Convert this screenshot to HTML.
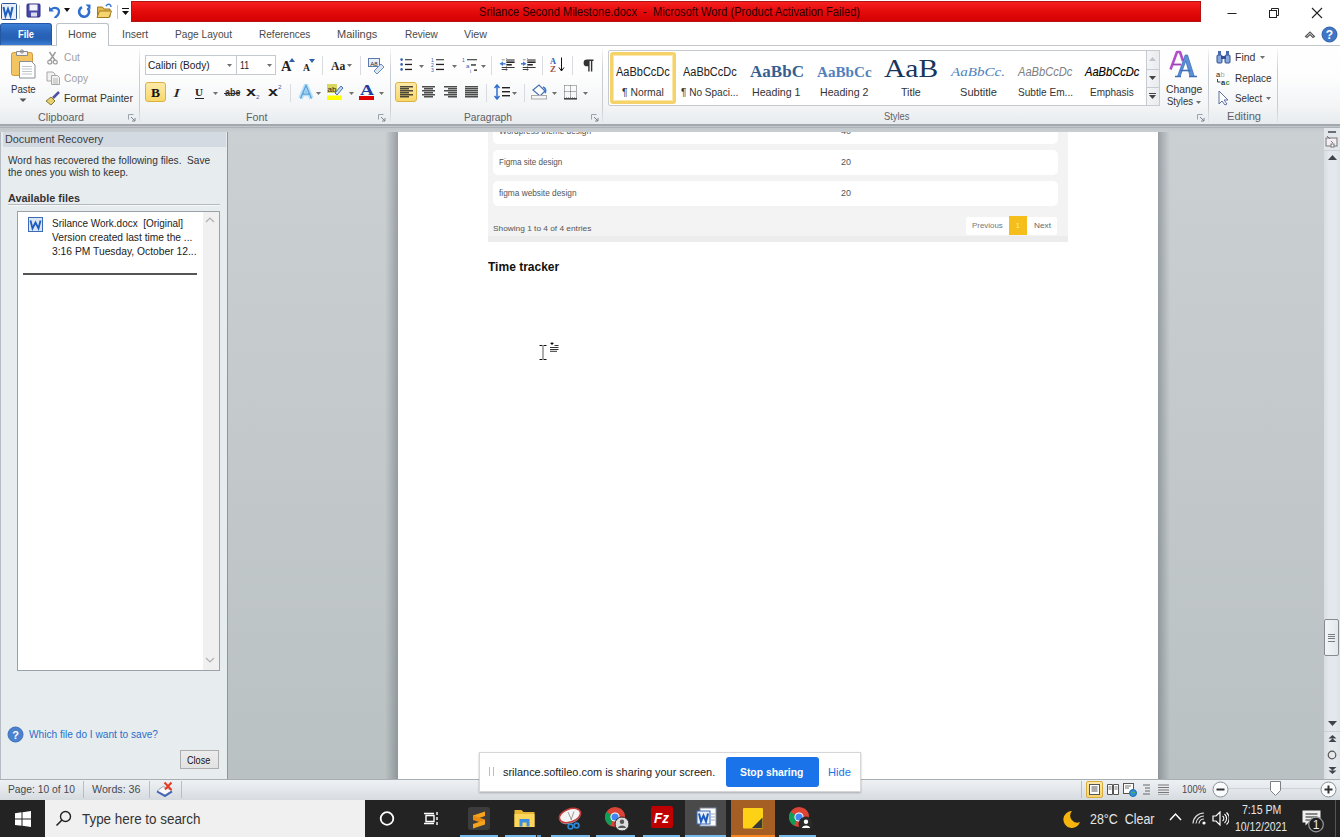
<!DOCTYPE html>
<html><head><meta charset="utf-8">
<style>
*{margin:0;padding:0;box-sizing:border-box}
html,body{width:1340px;height:837px;overflow:hidden;background:#fff;font-family:"Liberation Sans",sans-serif;font-size:12px;color:#333}
.a{position:absolute}
.t{position:absolute;white-space:pre;line-height:1;transform-origin:0 0}
</style></head><body>
<div class="a" style="left:0px;top:0px;width:1340px;height:45px;background:#fff"></div>
<div class="a" style="left:0px;top:125px;width:1340px;height:655px;background:linear-gradient(#cbd0d3,#c3c9cb 50%,#bac1c2)"></div>
<div class="a" style="left:385px;top:131px;width:13px;height:649px;background:linear-gradient(90deg,rgba(0,0,0,0),rgba(60,70,80,.35))"></div>
<div class="a" style="left:1158px;top:131px;width:12px;height:649px;background:linear-gradient(90deg,rgba(60,70,80,.35),rgba(0,0,0,0))"></div>
<div class="a" style="left:398px;top:131px;width:760px;height:649px;background:#fff"></div>
<div class="a" style="left:0px;top:45px;width:1340px;height:80px;background:linear-gradient(#fff,#fdfdfd 40%,#f3f5f7 75%,#e8ebee)"></div>
<div class="a" style="left:0px;top:45px;width:1340px;height:1px;background:#c3c7cb"></div>
<div class="a" style="left:0px;top:124px;width:1340px;height:2px;background:#aeb4bb"></div>
<div class="a" style="left:0px;top:126px;width:1340px;height:5px;background:linear-gradient(#b9bec4,#c9ced2)"></div>
<div class="a" style="left:131px;top:1px;width:1070px;height:21px;background:linear-gradient(#f5201f,#e50b0b 50%,#d40000);border:1px solid #b31414"></div>
<span class="t" style="left: 479px; font-size: 12px; color: rgb(42, 0, 0); font-family: &quot;Liberation Sans&quot;, sans-serif; top: 6px; transform: scaleX(0.9249);">Srilance Second Milestone.docx  -  Microsoft Word (Product Activation Failed)</span>
<svg class="a" style="left:1226px;top:8px;" width="12" height="12" viewBox="0 0 12 12"><path d="M1.5 5.5h9" stroke="#222" stroke-width="1"></path></svg>
<svg class="a" style="left:1268px;top:7px;" width="12" height="12" viewBox="0 0 12 12"><rect x="1.5" y="3.5" width="7" height="7" fill="none" stroke="#222"></rect><path d="M3.5 3.5v-2h7v7h-2" fill="none" stroke="#222"></path></svg>
<svg class="a" style="left:1311px;top:7px;" width="12" height="12" viewBox="0 0 12 12"><path d="M1 1l10 10M11 1L1 11" stroke="#222" stroke-width="1.1"></path></svg>
<svg class="a" style="left:0px;top:2px;" width="20" height="20" viewBox="0 0 20 20"><rect x="1.5" y="1.5" width="15" height="16" rx="1" fill="#e8eff8" stroke="#2b5797"></rect><path d="M3.5 5l2 9 2.5-7 2.5 7 2-9" fill="none" stroke="#1f5fbf" stroke-width="2"></path></svg>
<div class="a" style="left:19px;top:5px;width:1px;height:14px;background:#c7c7c7"></div>
<svg class="a" style="left:26px;top:3px;" width="16" height="17" viewBox="0 0 16 17"><rect x="1" y="1" width="13" height="13" rx="1" fill="#4848a8" stroke="#2c2c80"></rect><rect x="3.5" y="1.5" width="8" height="6" fill="#f4f4fb"></rect><rect x="5" y="9.5" width="6" height="4" fill="#dcdcf0"></rect></svg>
<svg class="a" style="left:46px;top:3px;" width="18" height="15" viewBox="0 0 18 15"><path d="M3 3.5v5h5z" fill="#2f6fd0"></path><path d="M5 6.5C8 4 13 4.5 13 8.5S10.5 13.5 8.5 15" fill="none" stroke="#2f6fd0" stroke-width="2.2"></path></svg>
<svg class="a" style="left:63px;top:7px;" width="8" height="6" viewBox="0 0 8 6"><path d="M1 1h6L4 5z" fill="#111"></path></svg>
<svg class="a" style="left:76px;top:3px;" width="16" height="15" viewBox="0 0 16 15"><path d="M6 4.2A5 5 0 1 0 11.5 5" fill="none" stroke="#2f6fd0" stroke-width="2.6"></path><path d="M9.5 1.5h5v5z" fill="#2f6fd0"></path></svg>
<svg class="a" style="left:96px;top:2px;" width="17" height="17" viewBox="0 0 17 17"><path d="M1.5 5h5l1.5 2h6v8h-12.5z" fill="#e6b84c" stroke="#a07a20"></path><path d="M3.5 9h12l-2.5 6.5h-12z" fill="#f6d56e" stroke="#a07a20"></path><path d="M10 4c2-3 5-2 5 1" fill="none" stroke="#3a7ad0" stroke-width="1.5"></path></svg>
<div class="a" style="left:117px;top:5px;width:1px;height:14px;background:#c7c7c7"></div>
<svg class="a" style="left:121px;top:7px;" width="9" height="10" viewBox="0 0 9 10"><path d="M1 1.5h7" stroke="#111"></path><path d="M1 4h7L4.5 8z" fill="#111"></path></svg>
<div class="a" style="left:0px;top:23px;width:52px;height:22px;background:linear-gradient(#3b7fd6,#2a64b9 45%,#2560b4 70%,#3a7cd4);border-radius:3px 3px 0 0;border:1px solid #2657a3;border-bottom:none"></div>
<span class="t" style="left: 18px; font-size: 11px; color: rgb(255, 255, 255); font-family: &quot;Liberation Sans&quot;, sans-serif; font-weight: 700; top: 29px; transform: scaleX(0.8442);">File</span>
<div class="a" style="left:56px;top:23px;width:53px;height:23px;background:#fff;border:1px solid #bcc1c7;border-bottom:none;border-radius:3px 3px 0 0"></div>
<span class="t" style="left: 68px; font-size: 10.5px; color: rgb(74, 74, 74); font-family: &quot;Liberation Sans&quot;, sans-serif; top: 29px; transform: scaleX(1.0173);">Home</span>
<span class="t" style="left: 122.4px; font-size: 10.5px; color: rgb(74, 74, 74); font-family: &quot;Liberation Sans&quot;, sans-serif; top: 29px; transform: scaleX(1.0013);">Insert</span>
<span class="t" style="left: 175.4px; font-size: 10.5px; color: rgb(74, 74, 74); font-family: &quot;Liberation Sans&quot;, sans-serif; top: 29px; transform: scaleX(0.9666);">Page Layout</span>
<span class="t" style="left: 259px; font-size: 10.5px; color: rgb(74, 74, 74); font-family: &quot;Liberation Sans&quot;, sans-serif; top: 29px; transform: scaleX(0.9571);">References</span>
<span class="t" style="left: 337.3px; font-size: 10.5px; color: rgb(74, 74, 74); font-family: &quot;Liberation Sans&quot;, sans-serif; top: 29px; transform: scaleX(1.0463);">Mailings</span>
<span class="t" style="left: 404.5px; font-size: 10.5px; color: rgb(74, 74, 74); font-family: &quot;Liberation Sans&quot;, sans-serif; top: 29px; transform: scaleX(0.9525);">Review</span>
<span class="t" style="left: 463.6px; font-size: 10.5px; color: rgb(74, 74, 74); font-family: &quot;Liberation Sans&quot;, sans-serif; top: 29px; transform: scaleX(1.0187);">View</span>
<svg class="a" style="left:1304px;top:29px;" width="12" height="10" viewBox="0 0 12 10"><path d="M1.5 7.5L6 3l4.5 4.5L9 8.5 6 5.5 3 8.5z" fill="none" stroke="#555" stroke-width="1.1"></path></svg>
<svg class="a" style="left:1321px;top:26px;" width="17" height="17" viewBox="0 0 17 17"><circle cx="8.5" cy="8.5" r="7.5" fill="#3f77c6" stroke="#2f5fa6"></circle><text x="8.5" y="13" text-anchor="middle" font-family="Liberation Sans" font-weight="700" font-size="12" fill="#fff">?</text></svg>
<svg class="a" style="left:10px;top:49px;" width="28" height="30" viewBox="0 0 28 30"><rect x="1.5" y="3.5" width="21" height="23" rx="2" fill="#f2c462" stroke="#d09a3e"></rect><path d="M6.5 2.5h11v4h-11z" fill="#f4f4f4" stroke="#8a8a8a"></path><circle cx="12" cy="2.5" r="1.6" fill="none" stroke="#8a8a8a"></circle><path d="M9.5 12.5h12l3.5 3.5v13h-15.5z" fill="#fff" stroke="#8a9099"></path><path d="M12 17.5h10M12 20h10M12 22.5h10M12 25h10" stroke="#c0c6cc"></path></svg>
<span class="t" style="left: 10.6px; font-size: 10.3px; color: rgb(51, 51, 51); font-family: &quot;Liberation Sans&quot;, sans-serif; top: 84.7px; transform: scaleX(0.9376);">Paste</span>
<svg class="a" style="left:19px;top:98px;" width="8" height="5" viewBox="0 0 8 5"><path d="M0.5 0.5h7L4 4z" fill="#555"></path></svg>
<svg class="a" style="left:47px;top:51px;" width="11" height="14" viewBox="0 0 11 14"><path d="M2.5 1l6 9M8.5 1l-6 9" stroke="#9a9a9a" stroke-width="1.4"></path><circle cx="2.8" cy="11" r="2" fill="none" stroke="#9a9a9a" stroke-width="1.2"></circle><circle cx="8.2" cy="11" r="2" fill="none" stroke="#9a9a9a" stroke-width="1.2"></circle></svg>
<span class="t" style="left: 63.8px; font-size: 10.3px; color: rgb(160, 160, 160); font-family: &quot;Liberation Sans&quot;, sans-serif; top: 53.4px; transform: scaleX(0.9918);">Cut</span>
<svg class="a" style="left:46px;top:71px;" width="15" height="14" viewBox="0 0 15 14"><path d="M1 1h6l2 2v7H1z" fill="#f2f2f2" stroke="#a8a8a8"></path><path d="M5.5 4.5h6l2 2v7h-8z" fill="#f2f2f2" stroke="#a8a8a8"></path><path d="M7 8h5M7 10h5M7 12h5" stroke="#b5b5b5"></path></svg>
<span class="t" style="left: 63.8px; font-size: 10.3px; color: rgb(160, 160, 160); font-family: &quot;Liberation Sans&quot;, sans-serif; top: 73.5px; transform: scaleX(1.0022);">Copy</span>
<svg class="a" style="left:45px;top:91px;" width="16" height="15" viewBox="0 0 16 15"><path d="M1 10l5-4 4 4-4 4z" fill="#e8d070" stroke="#8a7a30"></path><path d="M8 7l6-6" stroke="#5050a0" stroke-width="2.5"></path></svg>
<span class="t" style="left: 63.8px; font-size: 10.3px; color: rgb(51, 51, 51); font-family: &quot;Liberation Sans&quot;, sans-serif; top: 94.2px; transform: scaleX(1.0116);">Format Painter</span>
<span class="t" style="left: 38px; font-size: 10.3px; color: rgb(94, 97, 102); font-family: &quot;Liberation Sans&quot;, sans-serif; top: 112.7px; transform: scaleX(1.0436);">Clipboard</span>
<svg class="a" style="left:128px;top:114px;" width="8" height="8" viewBox="0 0 8 8"><path d="M0.5 0.5h5M0.5 0.5v5" stroke="#9aa3ad"></path><path d="M3 3l4 4M7 4v3H4" fill="none" stroke="#7a838d"></path></svg>
<div class="a" style="left:139px;top:49px;width:1px;height:73px;background:linear-gradient(rgba(200,205,210,.2),#c9ced4 30%,#c9ced4 80%,rgba(200,205,210,.3))"></div>
<div class="a" style="left:145px;top:55px;width:92px;height:20px;background:#fff;border:1px solid #c5cad0"></div>
<div class="a" style="left:236px;top:55px;width:40px;height:20px;background:#fff;border:1px solid #c5cad0"></div>
<span class="t" style="left: 148.4px; font-size: 10.3px; color: rgb(34, 34, 34); font-family: &quot;Liberation Sans&quot;, sans-serif; top: 60.6px; transform: scaleX(0.9876);">Calibri (Body)</span>
<span class="t" style="left: 240px; font-size: 10.3px; color: rgb(34, 34, 34); font-family: &quot;Liberation Sans&quot;, sans-serif; top: 60.6px; transform: scaleX(0.8409);">11</span>
<svg class="a" style="left:227px;top:63.5px;" width="5" height="3" viewBox="0 0 5 3"><path d="M0 0h5L2.5 3z" fill="#707070"></path></svg>
<svg class="a" style="left:267px;top:63.5px;" width="5" height="3" viewBox="0 0 5 3"><path d="M0 0h5L2.5 3z" fill="#707070"></path></svg>
<span class="t" style="left: 281px; font-size: 14px; color: rgb(34, 34, 34); font-family: &quot;Liberation Serif&quot;, serif; font-weight: 700; top: 59.7px; transform: scaleX(1.037);">A</span>
<svg class="a" style="left:289px;top:58px;" width="6" height="4" viewBox="0 0 6 4"><path d="M0 4L3 0l3 4z" fill="#2f5fb0"></path></svg>
<span class="t" style="left: 302.5px; font-size: 10px; color: rgb(34, 34, 34); font-family: &quot;Liberation Serif&quot;, serif; font-weight: 700; top: 62.7px; transform: scaleX(0.9676);">A</span>
<svg class="a" style="left:309px;top:59px;" width="6" height="4" viewBox="0 0 6 4"><path d="M0 0h6L3 4z" fill="#2f5fb0"></path></svg>
<div class="a" style="left:322px;top:56px;width:1px;height:19px;background:#d8dce0"></div>
<span class="t" style="left: 330.6px; font-size: 13px; color: rgb(34, 34, 34); font-family: &quot;Liberation Serif&quot;, serif; font-weight: 700; top: 59.3px; transform: scaleX(0.8936);">Aa</span>
<svg class="a" style="left:347px;top:63.5px;" width="5" height="3" viewBox="0 0 5 3"><path d="M0 0h5L2.5 3z" fill="#707070"></path></svg>
<div class="a" style="left:360px;top:56px;width:1px;height:19px;background:#d8dce0"></div>
<svg class="a" style="left:367px;top:57px;" width="18" height="17" viewBox="0 0 18 17"><rect x="1.5" y="1.5" width="11" height="8" fill="#e8eef8" stroke="#5a7ab0"></rect><text x="7" y="8.5" text-anchor="middle" font-size="6" font-family="Liberation Sans" fill="#223">A8</text><path d="M7 14l7-7 3 3-7 7z" fill="#dde6f4" stroke="#6a8ac0"></path></svg>
<div class="a" style="left:145px;top:82px;width:21px;height:20px;background:linear-gradient(#fdeaa8,#f9d86a);border:1px solid #dcb042;border-radius:3px"></div>
<span class="t" style="left: 151px; font-size: 12px; color: rgb(17, 17, 17); font-family: &quot;Liberation Serif&quot;, serif; font-weight: 700; top: 86.5px; transform: scaleX(1.1228);">B</span>
<span class="t" style="left: 173px; font-size: 12px; color: rgb(34, 34, 34); font-family: &quot;Liberation Serif&quot;, serif; font-style: italic; top: 86.5px; transform: scaleX(1.75);">I</span>
<span class="t" style="left: 195px; font-size: 10.3px; color: rgb(34, 34, 34); font-family: &quot;Liberation Serif&quot;, serif; font-weight: 700; top: 88px; transform: scaleX(1.0756);">U</span>
<div class="a" style="left:194.5px;top:98px;width:9px;height:1px;background:#222"></div>
<svg class="a" style="left:213px;top:91.5px;" width="5" height="3" viewBox="0 0 5 3"><path d="M0 0h5L2.5 3z" fill="#707070"></path></svg>
<span class="t" style="left: 224.5px; font-size: 10px; color: rgb(51, 51, 51); font-family: &quot;Liberation Sans&quot;, sans-serif; font-weight: 700; top: 88px; transform: scaleX(0.8994);">abe</span>
<div class="a" style="left:224px;top:92.5px;width:16px;height:1px;background:#333"></div>
<span class="t" style="left: 246px; font-size: 12px; color: rgb(34, 34, 34); font-family: &quot;Liberation Sans&quot;, sans-serif; font-weight: 700; top: 86px; transform: scaleX(1.4953);">x</span>
<span class="t" style="left: 256px; font-size: 6px; color: rgb(47, 95, 176); font-family: &quot;Liberation Sans&quot;, sans-serif; top: 94px; transform: scaleX(1.0467);">2</span>
<span class="t" style="left: 268px; font-size: 12px; color: rgb(34, 34, 34); font-family: &quot;Liberation Sans&quot;, sans-serif; font-weight: 700; top: 86px; transform: scaleX(1.4953);">x</span>
<span class="t" style="left: 278px; font-size: 6px; color: rgb(47, 95, 176); font-family: &quot;Liberation Sans&quot;, sans-serif; top: 84px; transform: scaleX(1.0467);">2</span>
<div class="a" style="left:290px;top:84px;width:1px;height:18px;background:#d8dce0"></div>
<svg class="a" style="left:298px;top:84px;" width="16" height="16" viewBox="0 0 16 16"><path d="M2.5 14.5L8 1.5l5.5 13M5 10h6" fill="none" stroke="#b5e0f8" stroke-width="4.5" stroke-linejoin="round"></path><path d="M2.5 14.5L8 1.5l5.5 13M5 10h6" fill="none" stroke="#5aa0dc" stroke-width="1.3"></path><path d="M8 5l2 5H6z" fill="#8ec6ec"></path></svg>
<svg class="a" style="left:316px;top:91.5px;" width="5" height="3" viewBox="0 0 5 3"><path d="M0 0h5L2.5 3z" fill="#707070"></path></svg>
<svg class="a" style="left:326px;top:83px;" width="18" height="18" viewBox="0 0 18 18"><rect x="1" y="1" width="10" height="9" fill="#d8d860"></rect><text x="1.5" y="8.5" font-size="8" font-family="Liberation Sans" fill="#222">ab</text><path d="M9 10l6-7 2 2-6 7z" fill="#c8daf0" stroke="#4a70b0"></path><rect x="1" y="12.5" width="15" height="4.5" fill="#ffff00"></rect></svg>
<svg class="a" style="left:349px;top:91.5px;" width="5" height="3" viewBox="0 0 5 3"><path d="M0 0h5L2.5 3z" fill="#707070"></path></svg>
<span class="t" style="left: 360px; font-size: 14px; color: rgb(31, 63, 159); font-family: &quot;Liberation Serif&quot;, serif; font-weight: 700; top: 84px; transform: scaleX(1.3827);">A</span>
<div class="a" style="left:359px;top:96px;width:15px;height:4px;background:#e00000"></div>
<svg class="a" style="left:379px;top:91.5px;" width="5" height="3" viewBox="0 0 5 3"><path d="M0 0h5L2.5 3z" fill="#707070"></path></svg>
<svg class="a" style="left:378px;top:114px;" width="8" height="8" viewBox="0 0 8 8"><path d="M0.5 0.5h5M0.5 0.5v5" stroke="#9aa3ad"></path><path d="M3 3l4 4M7 4v3H4" fill="none" stroke="#7a838d"></path></svg>
<span class="t" style="left: 246.3px; font-size: 10.3px; color: rgb(94, 97, 102); font-family: &quot;Liberation Sans&quot;, sans-serif; top: 112.7px; transform: scaleX(1.0432);">Font</span>
<div class="a" style="left:390px;top:49px;width:1px;height:73px;background:linear-gradient(rgba(200,205,210,.2),#c9ced4 30%,#c9ced4 80%,rgba(200,205,210,.3))"></div>
<svg class="a" style="left:400px;top:58px;" width="14" height="13" viewBox="0 0 14 13"><circle cx="1.6" cy="1.6" r="1.3" fill="#2f5fb0"></circle><circle cx="1.6" cy="6.4" r="1.3" fill="#2f5fb0"></circle><circle cx="1.6" cy="11.4" r="1.3" fill="#2f5fb0"></circle><rect x="5" y="1" width="7" height="1.3" fill="#555"></rect><rect x="5" y="5.8" width="7" height="1.3" fill="#222"></rect><rect x="5" y="10.8" width="7" height="1.3" fill="#222"></rect></svg>
<svg class="a" style="left:419px;top:64.5px;" width="5" height="3" viewBox="0 0 5 3"><path d="M0 0h5L2.5 3z" fill="#707070"></path></svg>
<svg class="a" style="left:431px;top:57px;" width="16" height="15" viewBox="0 0 16 15"><text x="0" y="5" font-size="5" font-family="Liberation Sans" fill="#2f5fb0">1</text><text x="0" y="10" font-size="5" font-family="Liberation Sans" fill="#2f5fb0">2</text><text x="0" y="15" font-size="5" font-family="Liberation Sans" fill="#2f5fb0">3</text><rect x="5" y="2" width="8" height="1.3" fill="#555"></rect><rect x="5" y="6.8" width="8" height="1.3" fill="#222"></rect><rect x="5" y="11.8" width="8" height="1.3" fill="#222"></rect></svg>
<svg class="a" style="left:452px;top:64.5px;" width="5" height="3" viewBox="0 0 5 3"><path d="M0 0h5L2.5 3z" fill="#707070"></path></svg>
<svg class="a" style="left:462px;top:57px;" width="18" height="16" viewBox="0 0 18 16"><text x="0" y="5" font-size="5" font-family="Liberation Sans" fill="#2f5fb0">1</text><text x="4" y="10.5" font-size="6" font-family="Liberation Sans" fill="#2f5fb0">a</text><text x="8" y="16" font-size="5" font-family="Liberation Sans" fill="#2f5fb0">i</text><rect x="5" y="2" width="10" height="1.3" fill="#555"></rect><rect x="9" y="7.3" width="5" height="1.3" fill="#222"></rect><rect x="12" y="12.5" width="3" height="1.3" fill="#222"></rect></svg>
<svg class="a" style="left:481px;top:64.5px;" width="5" height="3" viewBox="0 0 5 3"><path d="M0 0h5L2.5 3z" fill="#707070"></path></svg>
<div class="a" style="left:491px;top:56px;width:1px;height:19px;background:#d8dce0"></div>
<svg class="a" style="left:499px;top:57px;" width="17" height="16" viewBox="0 0 17 16"><rect x="2.7" y="2.3" width="3" height="1" fill="#999"></rect><rect x="7.4" y="2" width="8.2" height="2.2" fill="#8a8a8a"></rect><rect x="7.4" y="4.5" width="8.2" height="1.4" fill="#111"></rect><rect x="7.4" y="7.1" width="5.4" height="1.4" fill="#111"></rect><rect x="2.7" y="10" width="12.9" height="0.9" fill="#222"></rect><rect x="2.7" y="12" width="5.8" height="0.9" fill="#333"></rect><path d="M7.4 1v13" stroke="#555" stroke-width="0.6" stroke-dasharray="1 1"></path><path d="M0.5 6.8L4 4.5v4.6z" fill="#3a78d0"></path><path d="M3 6.8h3.5" stroke="#3a78d0" stroke-width="1.4"></path></svg>
<svg class="a" style="left:519.5px;top:57px;" width="17" height="16" viewBox="0 0 17 16"><rect x="2.7" y="2.3" width="3" height="1" fill="#999"></rect><rect x="7.4" y="2" width="8.2" height="2.2" fill="#8a8a8a"></rect><rect x="7.4" y="4.5" width="8.2" height="1.4" fill="#111"></rect><rect x="7.4" y="7.1" width="5.4" height="1.4" fill="#111"></rect><rect x="2.7" y="10" width="12.9" height="0.9" fill="#222"></rect><rect x="2.7" y="12" width="5.8" height="0.9" fill="#333"></rect><path d="M7.4 1v13" stroke="#555" stroke-width="0.6" stroke-dasharray="1 1"></path><path d="M6.5 6.8L3 4.5v4.6z" fill="#3a78d0"></path><path d="M1 6.8h4" stroke="#3a78d0" stroke-width="1.4"></path></svg>
<div class="a" style="left:542px;top:56px;width:1px;height:19px;background:#d8dce0"></div>
<span class="t" style="left: 550.2px; font-size: 8.5px; color: rgb(47, 95, 176); font-family: &quot;Liberation Serif&quot;, serif; font-weight: 700; top: 56.8px; transform: scaleX(0.9771);">A</span>
<span class="t" style="left: 550.2px; font-size: 8.5px; color: rgb(160, 80, 74); font-family: &quot;Liberation Serif&quot;, serif; font-weight: 700; top: 64.6px; transform: scaleX(1.0579);">Z</span>
<svg class="a" style="left:558px;top:57px;" width="8" height="15" viewBox="0 0 8 15"><path d="M3.5 0.5v13" stroke="#111" stroke-width="1"></path><path d="M1 10.5l2.5 3.5 2.5-3.5" fill="none" stroke="#111" stroke-width="1"></path></svg>
<div class="a" style="left:572px;top:56px;width:1px;height:19px;background:#d8dce0"></div>
<svg class="a" style="left:583px;top:58.5px;" width="11" height="13" viewBox="0 0 11 13"><path d="M4 0.5h6.5v1.6H9.3V12.5H7.9V2.1H6.6V12.5H5.2V7.3H4A3.4 3.4 0 0 1 4 0.5z" fill="#333"></path></svg>
<div class="a" style="left:395px;top:82px;width:22px;height:20px;background:linear-gradient(#fdeaa8,#f9d86a);border:1px solid #dcb042;border-radius:3px"></div>
<svg class="a" style="left:400px;top:86px;" width="13" height="13" viewBox="0 0 13 13"><rect x="0" y="0.2" width="13" height="1.2" fill="#222"></rect><rect x="0" y="2.2" width="9" height="1.2" fill="#222"></rect><rect x="0" y="4.2" width="13" height="1.2" fill="#222"></rect><rect x="0" y="6.2" width="9" height="1.2" fill="#222"></rect><rect x="0" y="8.2" width="13" height="1.2" fill="#222"></rect><rect x="0" y="10.2" width="9" height="1.2" fill="#222"></rect></svg>
<svg class="a" style="left:421.5px;top:86px;" width="13" height="13" viewBox="0 0 13 13"><rect x="0.0" y="0.2" width="13" height="1.2" fill="#222"></rect><rect x="2.0" y="2.2" width="9" height="1.2" fill="#222"></rect><rect x="0.0" y="4.2" width="13" height="1.2" fill="#222"></rect><rect x="2.0" y="6.2" width="9" height="1.2" fill="#222"></rect><rect x="0.0" y="8.2" width="13" height="1.2" fill="#222"></rect><rect x="2.0" y="10.2" width="9" height="1.2" fill="#222"></rect></svg>
<svg class="a" style="left:444px;top:86px;" width="13" height="13" viewBox="0 0 13 13"><rect x="0" y="0.2" width="13" height="1.2" fill="#222"></rect><rect x="4" y="2.2" width="9" height="1.2" fill="#222"></rect><rect x="0" y="4.2" width="13" height="1.2" fill="#222"></rect><rect x="4" y="6.2" width="9" height="1.2" fill="#222"></rect><rect x="0" y="8.2" width="13" height="1.2" fill="#222"></rect><rect x="4" y="10.2" width="9" height="1.2" fill="#222"></rect></svg>
<svg class="a" style="left:465px;top:86px;" width="13" height="13" viewBox="0 0 13 13"><rect x="0" y="0.2" width="13" height="1.2" fill="#222"></rect><rect x="0" y="2.2" width="13" height="1.2" fill="#222"></rect><rect x="0" y="4.2" width="13" height="1.2" fill="#222"></rect><rect x="0" y="6.2" width="13" height="1.2" fill="#222"></rect><rect x="0" y="8.2" width="13" height="1.2" fill="#222"></rect><rect x="0" y="10.2" width="13" height="1.2" fill="#222"></rect></svg>
<div class="a" style="left:486px;top:84px;width:1px;height:18px;background:#d8dce0"></div>
<svg class="a" style="left:494px;top:84px;" width="18" height="16" viewBox="0 0 18 16"><path d="M3 1v14M0.5 4L3 1l2.5 3M0.5 12L3 15l2.5-3" fill="none" stroke="#2f6fd0" stroke-width="1.5"></path><rect x="8" y="3" width="8" height="1.4" fill="#222"></rect><rect x="8" y="7" width="8" height="1.4" fill="#222"></rect><rect x="8" y="11" width="8" height="1.4" fill="#222"></rect></svg>
<svg class="a" style="left:512px;top:91.5px;" width="5" height="3" viewBox="0 0 5 3"><path d="M0 0h5L2.5 3z" fill="#707070"></path></svg>
<div class="a" style="left:524px;top:84px;width:1px;height:18px;background:#d8dce0"></div>
<svg class="a" style="left:531px;top:83px;" width="17" height="17" viewBox="0 0 17 17"><path d="M2 7l6-5 6 6-5 5z" fill="#fff" stroke="#4a6fb0" stroke-width="1.2"></path><path d="M12 4c3 1 3 4 2 6" fill="none" stroke="#3a7ad0" stroke-width="1.8"></path><rect x="0.5" y="12.5" width="15" height="3.5" fill="#f6f6f6" stroke="#aaa"></rect></svg>
<svg class="a" style="left:552px;top:91.5px;" width="5" height="3" viewBox="0 0 5 3"><path d="M0 0h5L2.5 3z" fill="#707070"></path></svg>
<svg class="a" style="left:564px;top:85px;" width="13" height="15" viewBox="0 0 13 15"><path d="M0.5 0.5h12v12.5h-12zM6.5 0.5v12.5M0.5 6.5h12" fill="none" stroke="#555" stroke-width="0.9" stroke-dasharray="1 1"></path><rect x="0" y="13" width="13" height="1.6" fill="#444"></rect></svg>
<svg class="a" style="left:583px;top:91.5px;" width="5" height="3" viewBox="0 0 5 3"><path d="M0 0h5L2.5 3z" fill="#707070"></path></svg>
<svg class="a" style="left:591px;top:114px;" width="8" height="8" viewBox="0 0 8 8"><path d="M0.5 0.5h5M0.5 0.5v5" stroke="#9aa3ad"></path><path d="M3 3l4 4M7 4v3H4" fill="none" stroke="#7a838d"></path></svg>
<span class="t" style="left: 464px; font-size: 10.3px; color: rgb(94, 97, 102); font-family: &quot;Liberation Sans&quot;, sans-serif; top: 112.7px; transform: scaleX(0.9981);">Paragraph</span>
<div class="a" style="left:602px;top:49px;width:1px;height:73px;background:linear-gradient(rgba(200,205,210,.2),#c9ced4 30%,#c9ced4 80%,rgba(200,205,210,.3))"></div>
<div class="a" style="left:608px;top:50px;width:552px;height:56px;background:#fff;border:1px solid #c6cbd1;border-radius:2px"></div>
<div class="a" style="left:1146px;top:50px;width:14px;height:56px;background:linear-gradient(90deg,#f3f5f7,#e9ecef);border:1px solid #c6cbd1"></div>
<div class="a" style="left:1146px;top:69px;width:14px;height:1px;background:#c6cbd1"></div>
<div class="a" style="left:1146px;top:87px;width:14px;height:1px;background:#c6cbd1"></div>
<svg class="a" style="left:1149px;top:57px;" width="7" height="4" viewBox="0 0 7 4"><path d="M0 4L3.5 0 7 4z" fill="#c0c4c8"></path></svg>
<svg class="a" style="left:1149px;top:76px;" width="7" height="4" viewBox="0 0 7 4"><path d="M0 0h7L3.5 4z" fill="#444"></path></svg>
<svg class="a" style="left:1149px;top:93px;" width="7" height="6" viewBox="0 0 7 6"><rect x="0" y="0" width="7" height="1" fill="#444"></rect><path d="M0 2h7L3.5 6z" fill="#444"></path></svg>
<div class="a" style="left:610px;top:52px;width:66px;height:52px;background:#fff;border:3px solid #f5d36a;border-radius:3px;box-shadow:inset 0 0 0 1px #fbe8a8"></div>
<span class="t" style="left: 616px; font-size: 12px; color: rgb(34, 34, 34); font-family: &quot;Liberation Sans&quot;, sans-serif; top: 65.6px; transform: scaleX(0.9167);">AaBbCcDc</span>
<span class="t" style="left: 621.5px; font-size: 10.3px; color: rgb(51, 51, 51); font-family: &quot;Liberation Sans&quot;, sans-serif; top: 87.6px; transform: scaleX(1.0053);">¶ Normal</span>
<span class="t" style="left: 683px; font-size: 12px; color: rgb(34, 34, 34); font-family: &quot;Liberation Sans&quot;, sans-serif; top: 65.6px; transform: scaleX(0.915);">AaBbCcDc</span>
<span class="t" style="left: 681.2px; font-size: 10.3px; color: rgb(51, 51, 51); font-family: &quot;Liberation Sans&quot;, sans-serif; top: 87.6px; transform: scaleX(0.9751);">¶ No Spaci...</span>
<span class="t" style="left: 750px; font-size: 16.5px; color: rgb(54, 95, 145); font-family: &quot;Liberation Serif&quot;, serif; font-weight: 700; top: 63.8px; transform: scaleX(1.0332);">AaBbC</span>
<span class="t" style="left: 752.3px; font-size: 10.3px; color: rgb(51, 51, 51); font-family: &quot;Liberation Sans&quot;, sans-serif; top: 87.6px; transform: scaleX(1.0329);">Heading 1</span>
<span class="t" style="left: 816.8px; font-size: 14px; color: rgb(79, 129, 189); font-family: &quot;Liberation Serif&quot;, serif; font-weight: 700; top: 65.8px; transform: scaleX(1.0799);">AaBbCc</span>
<span class="t" style="left: 819.6px; font-size: 10.3px; color: rgb(51, 51, 51); font-family: &quot;Liberation Sans&quot;, sans-serif; top: 87.6px; transform: scaleX(1.0308);">Heading 2</span>
<span class="t" style="left: 883.7px; font-size: 26px; color: rgb(23, 54, 93); font-family: &quot;Liberation Serif&quot;, serif; top: 55.8px; transform: scaleX(1.1369);">AaB</span>
<span class="t" style="left: 900.9px; font-size: 10.3px; color: rgb(51, 51, 51); font-family: &quot;Liberation Sans&quot;, sans-serif; top: 87.6px; transform: scaleX(1.0326);">Title</span>
<span class="t" style="left: 951px; font-size: 13px; color: rgb(79, 129, 189); font-family: &quot;Liberation Serif&quot;, serif; font-style: italic; top: 64.6px; transform: scaleX(1.1572);">AaBbCc.</span>
<span class="t" style="left: 959.5px; font-size: 10.3px; color: rgb(51, 51, 51); font-family: &quot;Liberation Sans&quot;, sans-serif; top: 88px; transform: scaleX(1.0739);">Subtitle</span>
<span class="t" style="left: 1017.6px; font-size: 12px; color: rgb(128, 128, 128); font-family: &quot;Liberation Sans&quot;, sans-serif; font-style: italic; top: 65.6px; transform: scaleX(0.9269);">AaBbCcDc</span>
<span class="t" style="left: 1017.6px; font-size: 10.3px; color: rgb(51, 51, 51); font-family: &quot;Liberation Sans&quot;, sans-serif; top: 88px; transform: scaleX(0.9805);">Subtle Em...</span>
<span class="t" style="left: 1084.7px; font-size: 12px; color: rgb(0, 0, 0); font-family: &quot;Liberation Sans&quot;, sans-serif; font-style: italic; -webkit-text-stroke: 0.15px rgb(0, 0, 0); top: 65.6px; transform: scaleX(0.9252);">AaBbCcDc</span>
<span class="t" style="left: 1090px; font-size: 10.3px; color: rgb(51, 51, 51); font-family: &quot;Liberation Sans&quot;, sans-serif; top: 88px; transform: scaleX(0.9686);">Emphasis</span>
<span class="t" style="left: 883.7px; font-size: 10.3px; color: rgb(94, 97, 102); font-family: &quot;Liberation Sans&quot;, sans-serif; top: 112.4px; transform: scaleX(0.9021);">Styles</span>
<svg class="a" style="left:1168px;top:50px;" width="31" height="29" viewBox="0 0 31 29"><path d="M2.5 19.5L9 2h3l3 9" fill="none" stroke="#b04fc8" stroke-width="2.6" stroke-linejoin="round"></path><path d="M5 14.5h8" stroke="#a040b8" stroke-width="1.8"></path><path d="M9.5 26.5L17.2 5h2.3l6.8 21.5h-4.2L17.8 11 12 26.5z" fill="#5b8fd8" stroke="#3f6fb8" stroke-width="0.8"></path><path d="M12.5 20.5h10" stroke="#3f6fb8" stroke-width="1.6"></path><path d="M7 26.5h6M21 26.5h8" stroke="#3f6fb8" stroke-width="1.4"></path></svg>
<span class="t" style="left: 1165.7px; font-size: 10.3px; color: rgb(51, 51, 51); font-family: &quot;Liberation Sans&quot;, sans-serif; top: 85.4px; transform: scaleX(1.0061);">Change</span>
<span class="t" style="left: 1166.7px; font-size: 10.3px; color: rgb(51, 51, 51); font-family: &quot;Liberation Sans&quot;, sans-serif; top: 96.8px; transform: scaleX(0.927);">Styles</span>
<svg class="a" style="left:1196px;top:100.5px;" width="5" height="3" viewBox="0 0 5 3"><path d="M0 0h5L2.5 3z" fill="#707070"></path></svg>
<svg class="a" style="left:1197px;top:114px;" width="8" height="8" viewBox="0 0 8 8"><path d="M0.5 0.5h5M0.5 0.5v5" stroke="#9aa3ad"></path><path d="M3 3l4 4M7 4v3H4" fill="none" stroke="#7a838d"></path></svg>
<div class="a" style="left:1208px;top:49px;width:1px;height:73px;background:linear-gradient(rgba(200,205,210,.2),#c9ced4 30%,#c9ced4 80%,rgba(200,205,210,.3))"></div>
<svg class="a" style="left:1216px;top:50px;" width="15" height="14" viewBox="0 0 15 14"><rect x="1" y="5" width="5" height="8" rx="1" fill="#8aa8e0" stroke="#2f4f90"></rect><rect x="9" y="5" width="5" height="8" rx="1" fill="#8aa8e0" stroke="#2f4f90"></rect><rect x="2" y="1" width="3" height="4" fill="#4a6ab0"></rect><rect x="10" y="1" width="3" height="4" fill="#4a6ab0"></rect><rect x="5" y="6" width="5" height="3" fill="#2f4f90"></rect></svg>
<span class="t" style="left: 1234.5px; font-size: 10.3px; color: rgb(51, 51, 51); font-family: &quot;Liberation Sans&quot;, sans-serif; top: 53.2px; transform: scaleX(1.0184);">Find</span>
<svg class="a" style="left:1260px;top:56.0px;" width="5" height="3" viewBox="0 0 5 3"><path d="M0 0h5L2.5 3z" fill="#707070"></path></svg>
<svg class="a" style="left:1216px;top:70px;" width="16" height="16" viewBox="0 0 16 16"><text x="0" y="7" font-size="7.5" font-family="Liberation Sans" fill="#222">a</text><text x="4.5" y="7" font-size="7.5" font-family="Liberation Sans" fill="#aaa">b</text><text x="5" y="15" font-size="7.5" font-weight="700" font-family="Liberation Sans" fill="#333">a</text><text x="9.5" y="15" font-size="7.5" font-weight="700" font-family="Liberation Sans" fill="#3a9a3a">c</text><path d="M1.5 9v3h3" fill="none" stroke="#345" stroke-width="1"></path></svg>
<span class="t" style="left: 1234.5px; font-size: 10.3px; color: rgb(51, 51, 51); font-family: &quot;Liberation Sans&quot;, sans-serif; top: 73.6px; transform: scaleX(0.9661);">Replace</span>
<svg class="a" style="left:1218px;top:90px;" width="11" height="16" viewBox="0 0 11 16"><path d="M1 1v13l3-3 3 4 2-1-3-4h4z" fill="#fff" stroke="#5a6f9f"></path></svg>
<span class="t" style="left: 1234.5px; font-size: 10.3px; color: rgb(51, 51, 51); font-family: &quot;Liberation Sans&quot;, sans-serif; top: 94px; transform: scaleX(0.9467);">Select</span>
<svg class="a" style="left:1266px;top:96.5px;" width="5" height="3" viewBox="0 0 5 3"><path d="M0 0h5L2.5 3z" fill="#707070"></path></svg>
<span class="t" style="left: 1226.6px; font-size: 10.3px; color: rgb(94, 97, 102); font-family: &quot;Liberation Sans&quot;, sans-serif; top: 112.3px; transform: scaleX(1.0799);">Editing</span>
<div class="a" style="left:1277px;top:49px;width:1px;height:73px;background:linear-gradient(rgba(200,205,210,.2),#c9ced4 30%,#c9ced4 80%,rgba(200,205,210,.3))"></div>
<div class="a" style="left:0px;top:128px;width:228px;height:651px;background:#e7ecef;border-left:1px solid #b5bcc3;border-top:1px solid #b5bcc3;border-right:1px solid #8e959c"></div>
<div class="a" style="left:3px;top:131px;width:223px;height:16px;background:#d3dae1"></div>
<span class="t" style="left: 5.2px; font-size: 11px; color: rgb(59, 63, 68); font-family: &quot;Liberation Sans&quot;, sans-serif; top: 134.4px; transform: scaleX(0.9864);">Document Recovery</span>
<span class="t" style="left: 7.9px; font-size: 11px; color: rgb(51, 51, 51); font-family: &quot;Liberation Sans&quot;, sans-serif; top: 154.7px; transform: scaleX(0.919);">Word has recovered the following files.  Save</span>
<span class="t" style="left: 7.9px; font-size: 11px; color: rgb(51, 51, 51); font-family: &quot;Liberation Sans&quot;, sans-serif; top: 166.6px; transform: scaleX(0.9221);">the ones you wish to keep.</span>
<span class="t" style="left: 8.4px; font-size: 11px; color: rgb(51, 51, 51); font-family: &quot;Liberation Sans&quot;, sans-serif; font-weight: 700; top: 193.4px; transform: scaleX(0.9881);">Available files</span>
<div class="a" style="left:8px;top:204px;width:212px;height:1px;background:#b3b9be"></div>
<div class="a" style="left:8px;top:205px;width:212px;height:1px;background:#f6f8f9"></div>
<div class="a" style="left:17px;top:211px;width:203px;height:460px;background:#fff;border:1px solid #9aa1a8"></div>
<div class="a" style="left:202.5px;top:212px;width:16.5px;height:458px;background:#f0f0f0"></div>
<svg class="a" style="left:205px;top:217px;" width="10" height="6" viewBox="0 0 10 6"><path d="M1 5l4-4 4 4" fill="none" stroke="#b0b0b0" stroke-width="1.2"></path></svg>
<svg class="a" style="left:205px;top:657px;" width="10" height="6" viewBox="0 0 10 6"><path d="M1 1l4 4 4-4" fill="none" stroke="#b0b0b0" stroke-width="1.2"></path></svg>
<svg class="a" style="left:28px;top:217px;" width="15" height="15" viewBox="0 0 15 15"><rect x="0.5" y="0.5" width="14" height="14" fill="#dbe6f4" stroke="#3b6bb5"></rect><path d="M2.5 3.5l2 8 3-6 3 6 2-8" fill="none" stroke="#1d5bbf" stroke-width="1.8"></path></svg>
<span class="t" style="left: 51.9px; font-size: 11px; color: rgb(34, 34, 34); font-family: &quot;Liberation Sans&quot;, sans-serif; top: 218px; transform: scaleX(0.9061);">Srilance Work.docx  [Original]</span>
<span class="t" style="left: 51.9px; font-size: 11px; color: rgb(34, 34, 34); font-family: &quot;Liberation Sans&quot;, sans-serif; top: 231.6px; transform: scaleX(0.9296);">Version created last time the ...</span>
<span class="t" style="left: 51.9px; font-size: 11px; color: rgb(34, 34, 34); font-family: &quot;Liberation Sans&quot;, sans-serif; top: 245.6px; transform: scaleX(0.9359);">3:16 PM Tuesday, October 12...</span>
<div class="a" style="left:23px;top:273px;width:174px;height:2px;background:#555"></div>
<svg class="a" style="left:7px;top:726px;" width="17" height="17" viewBox="0 0 17 17"><circle cx="8.5" cy="8.5" r="7.5" fill="#4a82d0" stroke="#3a6fb8"></circle><text x="8.5" y="13" text-anchor="middle" font-family="Liberation Sans" font-weight="700" font-size="11" fill="#fff">?</text></svg>
<span class="t" style="left: 28.7px; font-size: 11px; color: rgb(42, 111, 202); font-family: &quot;Liberation Sans&quot;, sans-serif; top: 729.4px; transform: scaleX(0.9213);">Which file do I want to save?</span>
<div class="a" style="left:179.6px;top:750px;width:39.2px;height:18.5px;background:linear-gradient(#ececec,#e2e2e2);border:1px solid #adadad"></div>
<span class="t" style="left: 186.9px; font-size: 11px; color: rgb(17, 17, 17); font-family: &quot;Liberation Sans&quot;, sans-serif; top: 754.8px; transform: scaleX(0.8284);">Close</span>
<div class="a" style="left:1324px;top:128px;width:16px;height:651px;background:linear-gradient(90deg,#d8dde2,#e4e8ec 30%,#e4e8ec 70%,#dde2e6)"></div>
<div class="a" style="left:1324px;top:128px;width:16px;height:22px;background:#e3e7eb"></div>
<div class="a" style="left:1324px;top:150px;width:16px;height:1px;background:#cdd2d7"></div>
<div class="a" style="left:1328px;top:131px;width:8px;height:1.5px;background:#6b7077"></div>
<svg class="a" style="left:1325px;top:135px;" width="13" height="13" viewBox="0 0 13 13"><rect x="1" y="3" width="11" height="8" fill="#f4eef4" stroke="#777"></rect><path d="M2 1l3 3M6 6l2 2" stroke="#777"></path><rect x="6" y="9" width="3" height="3" fill="#fff" stroke="#777"></rect></svg>
<svg class="a" style="left:1328px;top:155px;" width="9" height="5" viewBox="0 0 9 5"><path d="M0 5L4.5 0 9 5z" fill="#3f4448"></path></svg>
<div class="a" style="left:1324px;top:619px;width:15px;height:37px;background:linear-gradient(90deg,#f3f6f8,#e3e7eb);border:1px solid #858b91;border-radius:2px"></div>
<div class="a" style="left:1328px;top:634px;width:7px;height:1px;background:#777d83"></div>
<div class="a" style="left:1328px;top:636.2px;width:7px;height:1px;background:#777d83"></div>
<div class="a" style="left:1328px;top:638.4px;width:7px;height:1px;background:#777d83"></div>
<div class="a" style="left:1328px;top:640.6px;width:7px;height:1px;background:#777d83"></div>
<svg class="a" style="left:1328px;top:721px;" width="9" height="5" viewBox="0 0 9 5"><path d="M0 0h9L4.5 5z" fill="#3f4448"></path></svg>
<div class="a" style="left:1324px;top:731px;width:16px;height:1px;background:#cdd2d7"></div>
<svg class="a" style="left:1328px;top:735px;" width="9" height="7" viewBox="0 0 9 7"><path d="M0.5 3.5L4.5 0 8.5 3.5zM0.5 7L4.5 3.5 8.5 7z" fill="#3f4448"></path></svg>
<svg class="a" style="left:1327px;top:750px;" width="10" height="10" viewBox="0 0 10 10"><circle cx="5" cy="5" r="3.8" fill="#e8e8e8" stroke="#555" stroke-width="1.2"></circle></svg>
<svg class="a" style="left:1328px;top:767px;" width="9" height="7" viewBox="0 0 9 7"><path d="M0.5 0L4.5 3.5 8.5 0zM0.5 3.5L4.5 7 8.5 3.5z" fill="#3f4448"></path></svg>
<div class="a" style="left:0px;top:778.5px;width:1340px;height:21.5px;background:linear-gradient(#eef1f4,#e3e7eb 50%,#d6dbe0);border-top:1.5px solid #a9aeb3"></div>
<span class="t" style="left: 7.6px; font-size: 11px; color: rgb(70, 74, 80); font-family: &quot;Liberation Sans&quot;, sans-serif; top: 784.3px; transform: scaleX(0.9348);">Page: 10 of 10</span>
<div class="a" style="left:83px;top:781px;width:1px;height:17px;background:#b8bec4"></div>
<span class="t" style="left: 92.3px; font-size: 11px; color: rgb(70, 74, 80); font-family: &quot;Liberation Sans&quot;, sans-serif; top: 784.3px; transform: scaleX(0.9712);">Words: 36</span>
<div class="a" style="left:149px;top:781px;width:1px;height:17px;background:#b8bec4"></div>
<svg class="a" style="left:156px;top:781px;" width="18" height="16" viewBox="0 0 18 16"><path d="M1 10L7 5.5 16 9.5 9 14z" fill="#fbfbfd" stroke="#8a8f99" stroke-width="0.8"></path><path d="M1 10.5L9 15l7-4.5" fill="none" stroke="#4066b8" stroke-width="2"></path><path d="M8.5 1.5l7 7.5M15.5 1.5L9 8.5" stroke="#e63c22" stroke-width="2"></path></svg>
<div class="a" style="left:181px;top:781px;width:1px;height:17px;background:#b8bec4"></div>
<div class="a" style="left:1081px;top:781px;width:1px;height:17px;background:#b8bec4"></div>
<div class="a" style="left:1086px;top:781px;width:17px;height:17px;background:linear-gradient(#fde9a8,#f8d46c);border:1px solid #d9ac3e;border-radius:2px"></div>
<svg class="a" style="left:1089px;top:784px;" width="11" height="11" viewBox="0 0 11 11"><rect x="0.5" y="0.5" width="10" height="10" fill="#fff" stroke="#555"></rect><path d="M2.5 3h6M2.5 5h6M2.5 7h6" stroke="#555"></path></svg>
<svg class="a" style="left:1107px;top:783px;" width="12" height="13" viewBox="0 0 12 13"><path d="M0.5 1.5h5v10h-5zM6.5 1.5h5v10h-5z" fill="#fff" stroke="#555"></path><path d="M1.5 4h3M1.5 6h3M7.5 4h3M7.5 6h3" stroke="#777"></path></svg>
<svg class="a" style="left:1123px;top:783px;" width="14" height="14" viewBox="0 0 14 14"><rect x="0.5" y="0.5" width="10" height="10" fill="#fff" stroke="#555"></rect><path d="M2 3h6M2 5h4" stroke="#777"></path><circle cx="10" cy="10" r="3.5" fill="#2f8fd8" stroke="#1f6fa8"></circle><path d="M8 9.5h4" stroke="#4caf50"></path></svg>
<svg class="a" style="left:1141px;top:784px;" width="10" height="11" viewBox="0 0 10 11"><path d="M2 1h7M4 4h5M4 7h5M2 10h7" stroke="#666"></path></svg>
<svg class="a" style="left:1158px;top:784px;" width="11" height="11" viewBox="0 0 11 11"><path d="M0 1h11M0 3.5h11M0 6h11M0 8.5h11M0 11h11" stroke="#777" stroke-width="1.2"></path></svg>
<span class="t" style="left: 1181.8px; font-size: 11px; color: rgb(70, 74, 80); font-family: &quot;Liberation Sans&quot;, sans-serif; top: 783.7px; transform: scaleX(0.86);">100%</span>
<svg class="a" style="left:1212px;top:781px;" width="17" height="17" viewBox="0 0 17 17"><circle cx="8.5" cy="8.5" r="7.5" fill="#fafbfc" stroke="#8a9096"></circle><path d="M4.5 8.5h8" stroke="#333" stroke-width="2"></path></svg>
<div class="a" style="left:1229px;top:788px;width:92px;height:2px;background:linear-gradient(#c4c9ce,#eef0f2)"></div>
<svg class="a" style="left:1270px;top:781px;" width="11" height="15" viewBox="0 0 11 15"><path d="M0.5 0.5h10v9l-5 5-5-5z" fill="#fff" stroke="#7a8086"></path></svg>
<svg class="a" style="left:1320px;top:781px;" width="17" height="17" viewBox="0 0 17 17"><circle cx="8.5" cy="8.5" r="7.5" fill="#fafbfc" stroke="#8a9096"></circle><path d="M4.5 8.5h8M8.5 4.5v8" stroke="#333" stroke-width="2"></path></svg>
<div class="a" style="left:488px;top:131px;width:580px;height:111px;background:#f3f3f3"></div>
<div class="a" style="left:488px;top:236px;width:580px;height:6px;background:#ececec"></div>
<div class="a" style="left:493px;top:125px;width:565px;height:19px;background:#fff;border-radius:5px"></div>
<div class="a" style="left:493px;top:150px;width:565px;height:25px;background:#fff;border-radius:5px"></div>
<div class="a" style="left:493px;top:181px;width:565px;height:25px;background:#fff;border-radius:5px"></div>
<span class="t" style="left: 499.1px; font-size: 9px; color: rgb(85, 85, 85); font-family: &quot;Liberation Sans&quot;, sans-serif; top: 127.2px; transform: scaleX(0.921);">Wordpress theme design</span>
<span class="t" style="left: 841px; font-size: 9px; color: rgb(85, 85, 85); font-family: &quot;Liberation Sans&quot;, sans-serif; top: 127.2px; transform: scaleX(0.9984);">40</span>
<span class="t" style="left: 499.1px; font-size: 9px; color: rgb(85, 85, 85); font-family: &quot;Liberation Sans&quot;, sans-serif; top: 158px; transform: scaleX(0.8973);">Figma site design</span>
<span class="t" style="left: 841px; font-size: 9px; color: rgb(85, 85, 85); font-family: &quot;Liberation Sans&quot;, sans-serif; top: 158px; transform: scaleX(0.9984);">20</span>
<span class="t" style="left: 499.1px; font-size: 9px; color: rgb(85, 85, 85); font-family: &quot;Liberation Sans&quot;, sans-serif; top: 189.1px; transform: scaleX(0.9233);">figma website design</span>
<span class="t" style="left: 841px; font-size: 9px; color: rgb(85, 85, 85); font-family: &quot;Liberation Sans&quot;, sans-serif; top: 189.1px; transform: scaleX(0.9984);">20</span>
<span class="t" style="left: 493.1px; font-size: 8px; color: rgb(85, 85, 85); font-family: &quot;Liberation Sans&quot;, sans-serif; top: 225.4px; transform: scaleX(1.0376);">Showing 1 to 4 of 4 entries</span>
<div class="a" style="left:965.6px;top:216.7px;width:91.4px;height:18.3px;background:#fff;border-radius:2px"></div>
<div class="a" style="left:1009px;top:216.2px;width:18.2px;height:19.3px;background:#f6be1a"></div>
<span class="t" style="left: 971.9px; font-size: 8px; color: rgb(119, 119, 119); font-family: &quot;Liberation Sans&quot;, sans-serif; top: 222.4px; transform: scaleX(0.9896);">Previous</span>
<span class="t" style="left: 1015.5px; font-size: 8px; color: rgb(255, 244, 192); font-family: &quot;Liberation Sans&quot;, sans-serif; top: 222.4px; transform: scaleX(0.786);">1</span>
<span class="t" style="left: 1033.5px; font-size: 8px; color: rgb(102, 102, 102); font-family: &quot;Liberation Sans&quot;, sans-serif; top: 222.4px; transform: scaleX(1.0332);">Next</span>
<span class="t" style="left: 487.8px; font-size: 12.5px; color: rgb(17, 17, 17); font-family: &quot;Liberation Sans&quot;, sans-serif; font-weight: 700; top: 260.7px; transform: scaleX(0.9605);">Time tracker</span>
<div class="a" style="left:0px;top:124px;width:1340px;height:2px;background:#a2a8ae"></div>
<div class="a" style="left:0px;top:126px;width:1340px;height:1px;background:#c2c7cb"></div>
<div class="a" style="left:0px;top:127px;width:1340px;height:1px;background:#abb1b6"></div>
<div class="a" style="left:0px;top:128px;width:1324px;height:3.5px;background:linear-gradient(#c3c8cc,#c9ced2)"></div>
<svg class="a" style="left:538px;top:344px;" width="10" height="17" viewBox="0 0 10 17"><path d="M1.5 1.5h3M5.5 1.5h3M1.5 15.5h3M5.5 15.5h3" stroke="#111" stroke-width="1.2"></path><path d="M5 2v13" stroke="#888" stroke-width="1.4"></path></svg>
<svg class="a" style="left:549px;top:341px;" width="11" height="11" viewBox="0 0 11 11"><path d="M1.5 2.5h3M3 1v3" stroke="#111" stroke-width="1"></path><path d="M5.5 4.5h4M1 6.5h8.5M1 8.5h8.5M1 10.3h7" stroke="#333" stroke-width="1"></path></svg>
<div class="a" style="left:478.8px;top:752px;width:382.5px;height:39.5px;background:#fff;border:1px solid #d6d6d6;box-shadow:0 1px 2px rgba(0,0,0,.25)"></div>
<div class="a" style="left:489px;top:766.5px;width:1px;height:9.5px;background:#bbb"></div>
<div class="a" style="left:492.5px;top:766.5px;width:1px;height:9.5px;background:#bbb"></div>
<span class="t" style="left: 503.3px; font-size: 11px; color: rgb(32, 33, 36); font-family: &quot;Liberation Sans&quot;, sans-serif; top: 767px; transform: scaleX(0.9945);">srilance.softileo.com is sharing your screen.</span>
<div class="a" style="left:725.5px;top:757px;width:93.5px;height:29.8px;background:#1a73e8;border-radius:3px"></div>
<span class="t" style="left: 740px; font-size: 11px; color: rgb(255, 255, 255); font-family: &quot;Liberation Sans&quot;, sans-serif; font-weight: 700; top: 767px; transform: scaleX(0.9415);">Stop sharing</span>
<span class="t" style="left: 828.3px; font-size: 11px; color: rgb(26, 115, 232); font-family: &quot;Liberation Sans&quot;, sans-serif; top: 767px; transform: scaleX(1.0122);">Hide</span>
<div class="a" style="left:0px;top:800px;width:1340px;height:37px;background:#232323"></div>
<svg class="a" style="left:15px;top:811px;" width="16" height="16" viewBox="0 0 16 16"><path d="M0 2.2L6.5 1.3v6.3H0zM7.5 1.2L16 0v7.6H7.5zM0 8.5h6.5v6.3L0 13.9zM7.5 8.5H16V16l-8.5-1.2z" fill="#fff"></path></svg>
<div class="a" style="left:45px;top:800px;width:319.5px;height:37px;background:#f0f0f0"></div>
<svg class="a" style="left:55px;top:810px;" width="17" height="17" viewBox="0 0 17 17"><circle cx="10.5" cy="6.5" r="5" fill="none" stroke="#222" stroke-width="1.4"></circle><path d="M7 10L1.5 15.5" stroke="#222" stroke-width="1.6"></path></svg>
<span class="t" style="left: 82.3px; font-size: 14px; color: rgb(51, 51, 51); font-family: &quot;Liberation Sans&quot;, sans-serif; top: 811.5px; transform: scaleX(0.9576);">Type here to search</span>
<svg class="a" style="left:379px;top:810px;" width="16" height="17" viewBox="0 0 16 17"><circle cx="8" cy="8.5" r="6.3" fill="none" stroke="#fff" stroke-width="1.8"></circle></svg>
<svg class="a" style="left:423px;top:810px;" width="16" height="17" viewBox="0 0 16 17"><path d="M1 3.5h10M1 13.5h10M3 5.5h8v6H3z" fill="none" stroke="#fff" stroke-width="1.4"></path><path d="M14 2v3M14 7v3M14 12v3" stroke="#fff" stroke-width="1.4"></path></svg>
<div class="a" style="left:468px;top:807px;width:22px;height:22.5px;background:#3c3c3c;border-radius:3px"></div>
<svg class="a" style="left:468px;top:807px;" width="22" height="23" viewBox="0 0 22 23"><path d="M5 8.5L17 4.5v4.5L5 13z" fill="#f7a31b"></path><path d="M5 8.5L17 12.5v4.5L5 13z" fill="#e88a10"></path><path d="M5 17L17 13v4.5L5 21.5z" fill="#f7a31b"></path></svg>
<div class="a" style="left:460px;top:835px;width:38px;height:2px;background:#76b9ed"></div>
<svg class="a" style="left:513px;top:809px;" width="23" height="19" viewBox="0 0 23 19"><path d="M1.5 1h7l2 2h11v15h-20z" fill="#e9b732"></path><rect x="1.5" y="5" width="20" height="13" fill="#fbd55c"></rect><path d="M6.5 17.5v-7.5h10v7.5h-3v-4h-4v4z" fill="#3d8ee0"></path></svg>
<div class="a" style="left:505px;top:835px;width:31px;height:2px;background:#76b9ed"></div>
<div class="a" style="left:537px;top:835px;width:4px;height:2px;background:#5a9bd0"></div>
<svg class="a" style="left:557px;top:806px;" width="28" height="26" viewBox="0 0 28 26"><ellipse cx="13" cy="11" rx="11" ry="6.5" transform="rotate(-20 13 11)" fill="#a8a8a8"></ellipse><ellipse cx="13" cy="9.5" rx="11" ry="6.5" transform="rotate(-20 13 9.5)" fill="#f4f4f4" stroke="#c43a3a" stroke-width="1.6"></ellipse><path d="M11 6l3.5 8M17 5.5l-3 8.5" stroke="#9a9a9a" stroke-width="1"></path><circle cx="13.5" cy="20.5" r="2.4" fill="none" stroke="#2f86d0" stroke-width="1.7"></circle><circle cx="19.5" cy="19.5" r="2.4" fill="none" stroke="#2f86d0" stroke-width="1.7"></circle></svg>
<div class="a" style="left:551px;top:835px;width:39px;height:2px;background:#76b9ed"></div>
<svg class="a" style="left:604px;top:806px;" width="26" height="26" viewBox="0 0 26 26"><circle cx="11" cy="11" r="10" fill="#db4437"></circle><path d="M11 11L2.3 6A10 10 0 0 0 6 19.7z" fill="#0f9d58"></path><path d="M11 11l5 8.7A10 10 0 0 0 21 11z" fill="#ffcd40"></path><path d="M11 11L21 11A10 10 0 0 0 16 2.3z" fill="#db4437"></path><circle cx="11" cy="11" r="4.6" fill="#fff"></circle><circle cx="11" cy="11" r="3.6" fill="#4285f4"></circle><circle cx="18" cy="18" r="7" fill="#dcdcdc" stroke="#232323" stroke-width="1"></circle><circle cx="18" cy="15.8" r="2.2" fill="#555"></circle><path d="M14 22c0-3.5 8-3.5 8 0z" fill="#555"></path></svg>
<div class="a" style="left:596px;top:835px;width:39px;height:2px;background:#76b9ed"></div>
<div class="a" style="left:650.5px;top:806px;width:22px;height:22px;background:#bf0000;border-radius:2px"></div>
<span class="t" style="left: 654px; font-size: 14px; color: rgb(255, 255, 255); font-family: &quot;Liberation Sans&quot;, sans-serif; font-weight: 700; font-style: italic; top: 811px; transform: scaleX(0.9639);">Fz</span>
<div class="a" style="left:643px;top:835px;width:37px;height:2px;background:#76b9ed"></div>
<div class="a" style="left:685px;top:800px;width:41.4px;height:37px;background:#4a4a4a"></div>
<svg class="a" style="left:696px;top:806px;" width="22" height="22" viewBox="0 0 22 22"><rect x="4" y="2" width="16" height="18" fill="#fff" stroke="#7a8aa0"></rect><rect x="1" y="5" width="13" height="13" fill="#e9f0fa" stroke="#3b6bb5"></rect><path d="M3 7.5l2 8 2.5-6 2.5 6 2-8" fill="none" stroke="#1d5bbf" stroke-width="2"></path><path d="M15 8h4M15 11h4M15 14h4" stroke="#9aaac0"></path></svg>
<div class="a" style="left:685px;top:835px;width:41px;height:2px;background:#76b9ed"></div>
<div class="a" style="left:730.5px;top:800px;width:44.6px;height:37px;background:#a55e24"></div>
<svg class="a" style="left:742px;top:807px;" width="22" height="23" viewBox="0 0 22 23"><rect x="1" y="1" width="20" height="20.5" rx="1" fill="#fcd116"></rect><path d="M20.5 10.5v10.5H10z" fill="#3a3a3a"></path></svg>
<div class="a" style="left:730.5px;top:835px;width:44.5px;height:2px;background:#f7861e"></div>
<svg class="a" style="left:788px;top:806px;" width="26" height="26" viewBox="0 0 26 26"><circle cx="11" cy="11" r="10" fill="#db4437"></circle><path d="M11 11L2.3 6A10 10 0 0 0 6 19.7z" fill="#0f9d58"></path><path d="M11 11l5 8.7A10 10 0 0 0 21 11z" fill="#ffcd40"></path><path d="M11 11L21 11A10 10 0 0 0 16 2.3z" fill="#db4437"></path><circle cx="11" cy="11" r="4.6" fill="#fff"></circle><circle cx="11" cy="11" r="3.6" fill="#4285f4"></circle><circle cx="18" cy="18" r="7" fill="#2a2a2a" stroke="#232323" stroke-width="1"></circle><circle cx="18" cy="15.8" r="2.2" fill="#fff"></circle><path d="M14 22c0-3.5 8-3.5 8 0z" fill="#fff"></path></svg>
<div class="a" style="left:779px;top:835px;width:37px;height:2px;background:#76b9ed"></div>
<svg class="a" style="left:1062px;top:810px;" width="19" height="18" viewBox="0 0 19 18"><path d="M10 1A8.5 8.5 0 1 0 18 12 7 7 0 0 1 10 1z" fill="#f6b40e"></path></svg>
<span class="t" style="left: 1089.7px; font-size: 14px; color: rgb(230, 230, 230); font-family: &quot;Liberation Sans&quot;, sans-serif; top: 811.7px; transform: scaleX(0.8895);">28°C  Clear</span>
<svg class="a" style="left:1169px;top:812px;" width="13" height="9" viewBox="0 0 13 9"><path d="M1 8l5.5-6 5.5 6" fill="none" stroke="#fff" stroke-width="1.5"></path></svg>
<svg class="a" style="left:1192px;top:812px;" width="14" height="13" viewBox="0 0 14 13"><path d="M1 11.5A11 11 0 0 1 12 1M4 11.5A8 8 0 0 1 12 4M7 11.5A5 5 0 0 1 12 7" fill="none" stroke="#ddd" stroke-width="1.2"></path><circle cx="12" cy="11" r="1.6" fill="#fff"></circle></svg>
<svg class="a" style="left:1212px;top:811px;" width="17" height="15" viewBox="0 0 17 15"><path d="M1 5h3l4-4v13l-4-4H1z" fill="none" stroke="#fff" stroke-width="1.2"></path><path d="M10.5 5a3 3 0 0 1 0 5M12.5 3a6 6 0 0 1 0 9M14.5 1.5a8 8 0 0 1 0 12" fill="none" stroke="#fff" stroke-width="1.1"></path></svg>
<span class="t" style="left: 1241.5px; font-size: 12px; color: rgb(230, 230, 230); font-family: &quot;Liberation Sans&quot;, sans-serif; top: 803.7px; transform: scaleX(0.8769);">7:15 PM</span>
<span class="t" style="left: 1234.8px; font-size: 12px; color: rgb(230, 230, 230); font-family: &quot;Liberation Sans&quot;, sans-serif; top: 820.9px; transform: scaleX(0.8674);">10/12/2021</span>
<svg class="a" style="left:1301px;top:809px;" width="25" height="25" viewBox="0 0 25 25"><path d="M1.5 1.5h18v12h-12l-3 3v-3h-3z" fill="#f0f0f0"></path><path d="M4.5 5h12M4.5 8h12M4.5 11h8" stroke="#1f2023" stroke-width="1"></path><circle cx="15" cy="15.5" r="7.3" fill="#1f2023" stroke="#9a9a9a" stroke-width="1.2"></circle><text x="15" y="20" text-anchor="middle" font-size="12" font-family="Liberation Sans" fill="#eee">1</text></svg>
<div class="a" style="left:1335px;top:800px;width:1px;height:37px;background:#555"></div>
</body></html>
